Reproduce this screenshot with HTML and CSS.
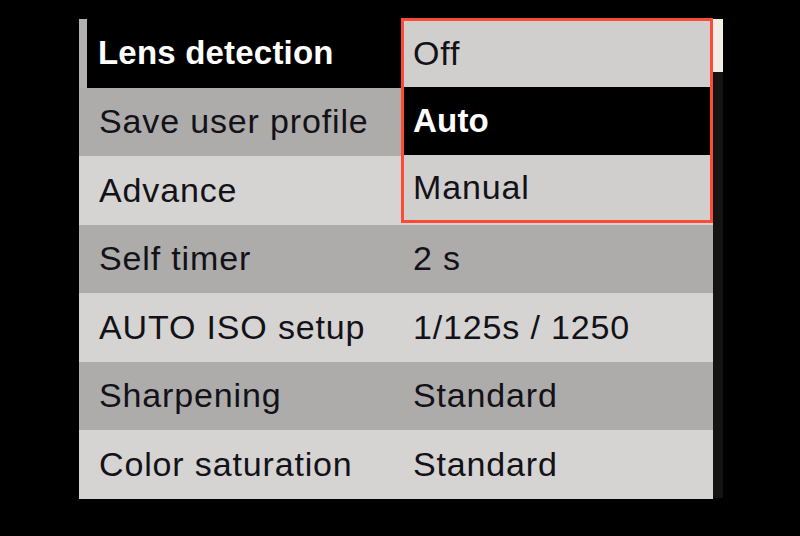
FILE: index.html
```html
<!DOCTYPE html>
<html lang="en">
<head>
    <meta charset="UTF-8">
    <title>Menu</title>
    <link rel="stylesheet" href="styles.css">
</head>
<body>
    <div class="screen">
        <div class="menu">
            <div class="row selected">
                <span class="label">Lens detection</span>
                <span class="value"></span>
            </div>
            <div class="row dark">
                <span class="label">Save user profile</span>
                <span class="value"></span>
            </div>
            <div class="row light">
                <span class="label">Advance</span>
                <span class="value"></span>
            </div>
            <div class="row dark">
                <span class="label">Self timer</span>
                <span class="value">2 s</span>
            </div>
            <div class="row light">
                <span class="label">AUTO ISO setup</span>
                <span class="value">1/125s / 1250</span>
            </div>
            <div class="row dark">
                <span class="label">Sharpening</span>
                <span class="value">Standard</span>
            </div>
            <div class="row light">
                <span class="label">Color saturation</span>
                <span class="value">Standard</span>
            </div>

            <!-- open dropdown for Lens detection -->
            <div class="popup">
                <div class="option">Off</div>
                <div class="option active">Auto</div>
                <div class="option">Manual</div>
            </div>
        </div>
        <div class="scrollbar">
            <div class="thumb"></div>
        </div>
    </div>
</body>
</html>
```

FILE: styles.css
```css
body {
    margin: 0;
    background-color: #000;
    font-family: "Liberation Sans", Arial, sans-serif;
}
.screen {
    display: flex;
    padding: 19px 0 0 79px;
    height: 536px;
    box-sizing: border-box;
}
.menu {
    position: relative;
    width: 634px;
}
.row {
    display: flex;
    align-items: center;
    height: 68.5px;
    font-size: 34px;
    letter-spacing: 0.85px;
    color: #121218;
}
.row.light {
    background-color: #d6d4d2;
}
.row.dark {
    background-color: #adacab;
}
.row.selected {
    background-color: #000;
    border-left: 8px solid #b2b1b0;
    color: #fff;
    font-weight: bold;
    font-size: 33px;
    letter-spacing: 0.2px;
}
.label {
    width: 334px;
    padding-left: 20px;
    box-sizing: border-box;
    white-space: nowrap;
}
.row.selected .label {
    width: 326px;
    padding-left: 11px;
}
.popup {
    position: absolute;
    left: 322px;
    top: -1px;
    width: 312px;
    height: 205px;
    box-sizing: border-box;
    border: 3px solid #ff4a36;
    display: flex;
    flex-direction: column;
}
.option {
    flex: 1;
    display: flex;
    align-items: center;
    padding-left: 9px;
    background-color: #d1cfcd;
    color: #121218;
    font-size: 34px;
    letter-spacing: 0.85px;
}
.option.active {
    flex: 0 0 68px;
    background-color: #000;
    color: #fff;
    font-weight: bold;
    font-size: 33px;
    letter-spacing: 0.2px;
}
.scrollbar {
    width: 10px;
    height: 479px;
    background-color: #141414;
}
.thumb {
    height: 53px;
    background-color: #f2eee6;
}
```
